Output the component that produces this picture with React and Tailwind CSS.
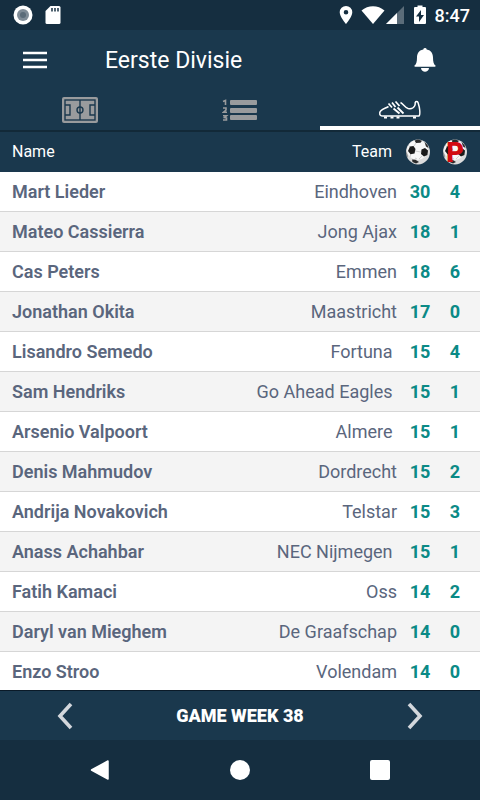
import React, { useState } from 'react';

const players = [
  { name: 'Mart Lieder', team: 'Eindhoven', goals: 30, pens: 4 },
  { name: 'Mateo Cassierra', team: 'Jong Ajax', goals: 18, pens: 1 },
  { name: 'Cas Peters', team: 'Emmen', goals: 18, pens: 6 },
  { name: 'Jonathan Okita', team: 'Maastricht', goals: 17, pens: 0 },
  { name: 'Lisandro Semedo', team: 'Fortuna ', goals: 15, pens: 4 },
  { name: 'Sam Hendriks', team: 'Go Ahead Eagles ', goals: 15, pens: 1 },
  { name: 'Arsenio Valpoort', team: 'Almere ', goals: 15, pens: 1 },
  { name: 'Denis Mahmudov', team: 'Dordrecht', goals: 15, pens: 2 },
  { name: 'Andrija Novakovich', team: 'Telstar', goals: 15, pens: 3 },
  { name: 'Anass Achahbar', team: 'NEC Nijmegen ', goals: 15, pens: 1 },
  { name: 'Fatih Kamaci', team: 'Oss', goals: 14, pens: 2 },
  { name: 'Daryl van Mieghem', team: 'De Graafschap', goals: 14, pens: 0 },
  { name: 'Enzo Stroo', team: 'Volendam', goals: 14, pens: 0 },
];

const Football = () => (
  <svg width="24" height="26" viewBox="0 0 24 26" className="shrink-0" aria-hidden="true">
    <ellipse cx="12" cy="13" rx="12" ry="12.500" fill="#dcdcdc" />
    <ellipse cx="11.500" cy="11" rx="10.500" ry="10" fill="#f7f7f7" />
    <g stroke="#bdbdbd" strokeWidth="0.700" fill="none">
      <path d="M8 7l2-3M4 8L2 6M9 12l6 1M5 14l-1 4M16 17l-3 3M11 20l-2-1" />
    </g>
    <path d="M4 7.500l3.500-.5 2 3-1 4.500-4 .8L2 12z" fill="#1a1a1a" />
    <path d="M15.500 10.500l3.500-1.500 3 2.500-.6 4.500-3.400 1.500-3-2.500z" fill="#1a1a1a" />
    <path d="M8.500 1.500l3.500-1 4 1.300-1.500 2-4.500.2z" fill="#2a2a2a" />
    <path d="M18.500 3l3 3 1 3-2.500-1.500z" fill="#2a2a2a" />
    <path d="M0 12l1.200 3 .6 4L.8 17z" fill="#555" />
    <path d="M6 20.500l3.500.2 3.500 2.300-3 1.500-3.500-1.500z" fill="#2a2a2a" />
  </svg>
);

const Pitch = () => (
  <svg width="38" height="28" viewBox="0 0 38 28" aria-hidden="true">
    <rect x="1" y="1" width="36" height="26" rx="2" fill="#999b9d" />
    <g fill="none" stroke="#1a384d" strokeWidth="1.400">
      <rect x="4" y="4" width="30" height="20" />
      <path d="M19 4v20M4 9h5v10H4M34 9h-5v10h5" />
      <circle cx="19" cy="14" r="3" />
    </g>
  </svg>
);

const RankList = () => (
  <svg width="36" height="26" viewBox="0 0 36 26" aria-hidden="true">
    <g fill="#999b9d">
      <rect x="8" y="3" width="27" height="5" rx="1" />
      <rect x="8" y="11" width="27" height="5" rx="1" />
      <rect x="8" y="18" width="27" height="5" rx="1" />
    </g>
    <g fill="none" stroke="#999b9d" strokeWidth="1.600">
      <path d="M1 4.500l2.500-1V8" />
      <path d="M1 11h3v2L1.500 15.300H5" />
      <path d="M1 18.800h3.500l-2 1.800 2 .4v2H1" />
    </g>
  </svg>
);

const Boot = () => (
  <svg width="44" height="20" viewBox="0 0 44 20" aria-hidden="true" fill="none" stroke="#fff" strokeWidth="1.500" strokeLinejoin="round">
    <path d="M10.500 6.500C7 8.500 2.500 9.500 1.800 12.500c-.4 2.500.7 3.500 3.200 3.500h36c1.200-1 1-3 .7-6-.2-3-.9-5-1.700-7.500-.5-1.200-2.300-1.200-2.800 0 0 1.500.2 2-.6 3.500-1.200 2.300-4 3-6.500 2.500C27 7.500 25.500 4 22.500 2.500" />
    <path d="M10.500 3.500l3.500 4M14 2.500l3.500 4.500M17.500 1.500l4 4.500" strokeWidth="1.700" />
    <path d="M15.500 8.500l6 5M19.500 7.500l6 6" strokeWidth="1.800" />
    <path d="M6 17.500h3M12.500 17.500h3M18.500 17.500h3M35 17.500h3" strokeWidth="2" />
  </svg>
);

const StatusBar = () => (
  <div className="flex h-[30px] items-center justify-between bg-[#152e40] pr-[10px] pl-[13px] text-white">
    <div className="flex items-center gap-3">
      <svg width="20" height="20" viewBox="0 0 20 20" aria-hidden="true">
        <circle cx="10" cy="10" r="9.500" fill="#fff" />
        <circle cx="10" cy="10" r="6" fill="#7f8c97" />
        <circle cx="10" cy="10" r="3" fill="#5b6c79" />
      </svg>
      <svg width="16" height="20" viewBox="0 0 16 20" aria-hidden="true">
        <path d="M5.500 1H14q1.500 0 1.500 1.500v15q0 1.500-1.500 1.500H2q-1.500 0-1.500-1.500V6z" fill="#fff" />
        <path d="M7 3v3.500M10 3v3.500M13 3v3.500" stroke="#152e40" strokeWidth="1.500" />
      </svg>
    </div>
    <div className="flex items-center">
      <svg width="14" height="20" viewBox="0 0 14 20" aria-hidden="true">
        <path fillRule="evenodd" d="M7 1a6.300 6.300 0 0 0-6.300 6.300C.7 12 7 19 7 19s6.300-7 6.300-11.700A6.300 6.300 0 0 0 7 1zm0 4a2.300 2.300 0 1 1 0 4.600A2.300 2.300 0 0 1 7 5z" fill="#fff" />
      </svg>
      <svg className="ml-2" width="24" height="20" viewBox="0 0 24 20" aria-hidden="true">
        <path d="M.5 5.500C7-.3 17-.3 23.500 5.500L12 19z" fill="#fff" />
      </svg>
      <svg width="20" height="20" viewBox="0 0 20 20" aria-hidden="true">
        <path d="M19 1v18H1z" fill="#5b6c79" />
        <path d="M12 8v11H1z" fill="#fff" />
      </svg>
      <svg className="ml-2" width="14" height="20" viewBox="0 0 14 20" aria-hidden="true">
        <path d="M4.500.5h5V2H12q1 0 1 1v15q0 1-1 1H2q-1 0-1-1V3q0-1 1-1h2.500z" fill="#fff" />
        <path d="M8 5l-5 6.500h3V17l5-7H8z" fill="#152e40" />
      </svg>
      <span className="ml-2 text-[18px] font-medium">8:47</span>
    </div>
  </div>
);

const AppBar = () => (
  <header className="flex h-[60px] items-center bg-[#1a384d] pt-0.5 pr-[43px] pl-[23px] text-white">
    <button aria-label="Menu">
      <svg width="24" height="20" viewBox="0 0 24 20" aria-hidden="true">
        <path d="M0 2h24M0 9h24M0 16h24" stroke="#fff" strokeWidth="2.600" />
      </svg>
    </button>
    <h1 className="ml-[58px] flex-1 text-[23px]">Eerste Divisie</h1>
    <button aria-label="Notifications">
      <svg width="24" height="26" viewBox="0 0 24 26" aria-hidden="true" fill="#fff">
        <path d="M12 0q1.500 0 1.700 1.400C18.500 2.200 20 6 20 9.500c0 4.500.8 6.800 2.500 8q.5 1-.5 1.200H2q-1-.2-.5-1.200C3.200 16.300 4 14 4 9.500 4 6 5.500 2.200 10.300 1.400 10.500 0 12 0 12 0z" />
        <path d="M8 20h8c-.4 5-7.600 5-8 0z" />
      </svg>
    </button>
  </header>
);

const tabs = [
  { label: 'Matches', Icon: Pitch },
  { label: 'Standings', Icon: RankList },
  { label: 'Top scorers', Icon: Boot },
];

const App = () => {
  const [active, setActive] = useState(2);
  const [week, setWeek] = useState(38);

  return (
    <div className="min-h-screen bg-[#152e40] font-[Roboto,sans-serif]">
      <StatusBar />
      <AppBar />

      <nav className="grid grid-cols-3 bg-[#1a384d]">
        {tabs.map(({ label, Icon }, i) => (
          <button
            key={label}
            aria-label={label}
            onClick={() => setActive(i)}
            className={`flex h-10 items-center justify-center border-b-4 pt-1 ${
              i === active ? 'border-white' : 'border-transparent'
            }`}
          >
            <Icon />
          </button>
        ))}
      </nav>

      <table className="w-full table-fixed border-separate border-spacing-0 bg-white text-[18px] text-[#5a667d]">
        <thead>
          <tr className="h-[42px] bg-[#1a384d] text-base text-white *:border-t-2 *:border-[#122938]">
            <th className="pl-3 text-left font-normal">Name</th>
            <th className="pr-[5px] text-right font-normal">Team</th>
            <th className="w-[46px] pr-[5px]" aria-label="Goals">
              <div className="flex justify-center">
                <Football />
              </div>
            </th>
            <th className="w-[37px] pr-[13px]" aria-label="Penalties">
              <div className="relative flex justify-center">
                <Football />
                <span className="absolute inset-0 text-center text-[27px] leading-[28px] font-black text-[#d20a11]">P</span>
              </div>
            </th>
          </tr>
        </thead>
        <tbody>
          {players.map((p) => (
            <tr key={p.name} className="h-10 odd:bg-white even:bg-[#f4f4f4] *:border-b *:border-[#d6d6d6] last:h-[38px] last:*:border-b-0">
              <td className="pl-3 font-semibold whitespace-nowrap">{p.name}</td>
              <td className="text-right whitespace-pre">{p.team}</td>
              <td className="text-center font-bold text-[#0b8a86]">{p.goals}</td>
              <td className="pr-[13px] text-center font-bold text-[#0b8a86]">{p.pens}</td>
            </tr>
          ))}
        </tbody>
      </table>

      <div className="flex h-[50px] items-center justify-between border-t border-[#0a1a28] bg-[#1a384d] px-[57px] text-white">
        <button aria-label="Previous week" onClick={() => setWeek(week - 1)}>
          <svg width="16" height="28" viewBox="0 0 16 28" aria-hidden="true">
            <path d="M14 2L3 14l11 12" fill="none" stroke="#d3d7dc" strokeWidth="3.600" />
          </svg>
        </button>
        <span className="text-[18px] font-black">GAME WEEK {week}</span>
        <button aria-label="Next week" onClick={() => setWeek(week + 1)}>
          <svg width="16" height="28" viewBox="0 0 16 28" aria-hidden="true">
            <path d="M2 2l11 12L2 26" fill="none" stroke="#d3d7dc" strokeWidth="3.600" />
          </svg>
        </button>
      </div>

      <div className="flex h-[60px] items-center justify-between px-[90px]">
        <button aria-label="Back">
          <svg width="20" height="20" viewBox="0 0 20 20" aria-hidden="true">
            <path d="M1.500 10L18 1v18z" fill="#fff" stroke="#fff" strokeWidth="1.500" strokeLinejoin="round" />
          </svg>
        </button>
        <button aria-label="Home" className="size-5 rounded-full bg-white" />
        <button aria-label="Recent apps" className="size-5 rounded-xs bg-white" />
      </div>
    </div>
  );
};

export default App;
